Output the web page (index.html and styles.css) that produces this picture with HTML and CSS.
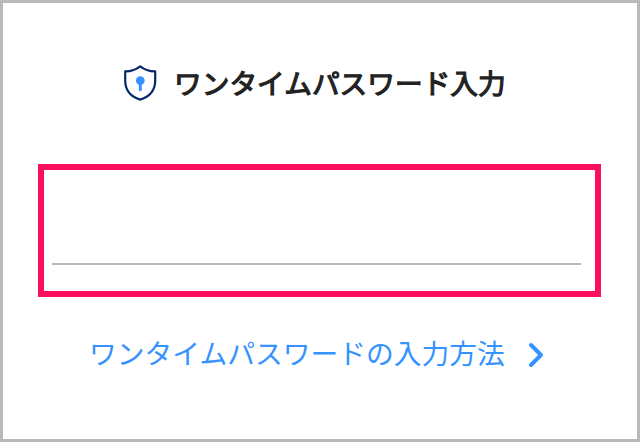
FILE: index.html
```html
<!DOCTYPE html>
<html lang="ja">
<head>
<meta charset="utf-8">
<title>ワンタイムパスワード入力</title>
<link rel="stylesheet" href="styles.css">
</head>
<body>
<main class="panel">
  <header class="heading">
    <svg class="shield" viewBox="0 0 36 38" aria-hidden="true">
      <path class="shield-outline" d="M18.200 2.300C14 5.700 9 7.200 3.200 7.400v9.100c0 9.500 5 16 15 19.100 10-3.100 15-9.600 15-19.100V7.400C27.400 7.200 22.400 5.700 18.200 2.300Z"/>
      <circle class="key" cx="18.300" cy="16.600" r="4.400"/>
      <path class="key-stem" d="M18.300 18v7.700"/>
    </svg>
    <h1 class="title">ワンタイムパスワード入力</h1>
  </header>
  <div class="field">
    <input class="otp" type="text" aria-label="ワンタイムパスワード">
  </div>
  <a class="help">
    <span class="help-text">ワンタイムパスワードの入力方法</span>
    <svg class="chevron" viewBox="0 0 18 26" aria-hidden="true"><path d="M4 3l10 10L4 23"/></svg>
  </a>
</main>
</body>
</html>
```
FILE: styles.css
```css
* { box-sizing: border-box; }
body { margin: 0; font-family: "Noto Sans CJK JP", sans-serif; }
.panel { width: 640px; height: 442px; border: 3px solid #b9b9b9; background: #fff; overflow: hidden; }
.heading { display: flex; align-items: center; height: 48px; margin: 56px 0 0 119px; }
.shield { width: 36px; height: 38px; fill: none; }
.shield-outline { stroke: #06296b; stroke-width: 2.2; stroke-linejoin: round; }
.key { fill: #3692ff; }
.key-stem { stroke: #3692ff; stroke-width: 3; stroke-linecap: round; }
.title { margin: -2px 0 0 16px; font-size: 27.7px; line-height: 48px; font-weight: 400; -webkit-text-stroke: 1.2px #222; color: #222; white-space: nowrap; }
.field { width: 563px; height: 133px; margin: 57px 0 0 35px; padding: 0 14px 26px 8px; border: 6px solid #fb0f5f; }
.otp { display: block; width: 100%; height: 95px; padding: 0 8px; border: 0; border-bottom: 2px solid #b7b8b8; outline: 0; background: transparent; font: inherit; font-size: 28px; }
.help { display: flex; align-items: center; height: 48px; margin: 32px 0 0 86px; color: #3692ff; }
.help-text { margin-top: -2px; font-size: 27.75px; line-height: 48px; white-space: nowrap; }
.chevron { width: 18px; height: 26px; margin: 3px 0 0 22px; fill: none; stroke: currentColor; stroke-width: 4; stroke-linecap: round; stroke-linejoin: round; }
```
